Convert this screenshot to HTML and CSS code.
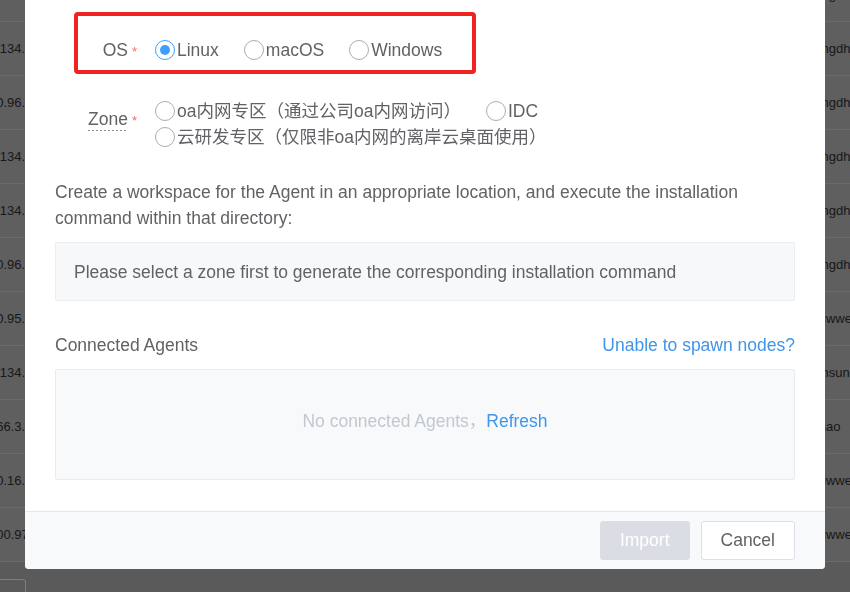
FILE: index.html
```html
<!DOCTYPE html>
<html lang="en">
<head>
<meta charset="utf-8">
<title>Import Agent</title>
<link rel="stylesheet" href="styles.css">
</head>
<body>
<div class="page">
  <div class="table">
    <div class="row"><span class="ip">9.134.58.12</span><span class="owner">wangdhui</span></div>
    <div class="row"><span class="ip">9.134.61.7</span><span class="owner">wangdhui</span></div>
    <div class="row"><span class="ip">10.96.12.45</span><span class="owner">wangdhui</span></div>
    <div class="row"><span class="ip">9.134.8.201</span><span class="owner">wangdhui</span></div>
    <div class="row"><span class="ip">9.134.77.19</span><span class="owner">wangdhui</span></div>
    <div class="row"><span class="ip">10.96.33.2</span><span class="owner">wangdhui</span></div>
    <div class="row"><span class="ip">10.95.1.18</span><span class="owner">zhuwwei</span></div>
    <div class="row"><span class="ip">9.134.2.33</span><span class="owner">wensun</span></div>
    <div class="row"><span class="ip">166.3.2.14</span><span class="owner">xuhao</span></div>
    <div class="row"><span class="ip">10.16.4.9</span><span class="owner">zhuwwei</span></div>
    <div class="row"><span class="ip">100.97.3.3</span><span class="owner">zhuwwei</span></div>
  </div>
  <div class="pager"></div>
</div>

<div class="mask"></div>

<div class="dialog">
  <div class="dialog-body">
    <div class="form-item">
      <label class="form-label">OS<span class="req">*</span></label>
      <div class="radio-group">
        <label class="radio checked"><span class="radio-input"></span><span class="radio-text">Linux</span></label>
        <label class="radio"><span class="radio-input"></span><span class="radio-text">macOS</span></label>
        <label class="radio"><span class="radio-input"></span><span class="radio-text">Windows</span></label>
      </div>
    </div>
    <div class="form-item zone">
      <label class="form-label"><span class="tip">Zone</span><span class="req">*</span></label>
      <div class="radio-group">
        <label class="radio"><span class="radio-input"></span><span class="radio-text">oa内网专区（通过公司oa内网访问）</span></label>
        <label class="radio"><span class="radio-input"></span><span class="radio-text">IDC</span></label>
        <label class="radio"><span class="radio-input"></span><span class="radio-text">云研发专区（仅限非oa内网的离岸云桌面使用）</span></label>
      </div>
    </div>
    <p class="desc">Create a workspace for the Agent in an appropriate location, and execute the installation command within that directory:</p>
    <div class="command">Please select a zone first to generate the corresponding installation command</div>
    <div class="agents-head">
      <span>Connected Agents</span>
      <a class="link">Unable to spawn nodes?</a>
    </div>
    <div class="agents-box">
      <span class="empty">No connected Agents，</span><a class="link">Refresh</a>
    </div>
  </div>
  <div class="dialog-footer">
    <button class="btn btn-primary" disabled>Import</button>
    <button class="btn">Cancel</button>
  </div>
  <div class="highlight"></div>
</div>
</body>
</html>
```

FILE: styles.css
```css
html, body {
  margin: 0;
  padding: 0;
}

body {
  width: 850px;
  height: 592px;
  overflow: hidden;
  position: relative;
  background: #b4b4b4;
  font-family: "Liberation Sans", Arial, "Noto Sans CJK SC", sans-serif;
}

/* background page (scrolled table) */
.page {
  margin-left: -11px;
  margin-top: -32px;
}

.row {
  height: 54px;
  box-sizing: border-box;
  border-bottom: 1px solid #d4d4d4;
  background: #bebebe;
  display: flex;
  align-items: center;
  font-size: 13px;
  color: #333333;
}

.ip {
  width: 200px;
  white-space: nowrap;
}

.owner {
  margin-left: auto;
  width: 45px;
  overflow: hidden;
  white-space: nowrap;
}

.pager {
  width: 37px;
  height: 28px;
  box-sizing: border-box;
  border: 1px solid #ffffff;
  border-radius: 3px;
  margin-top: 17px;
}

.mask {
  position: fixed;
  inset: 0;
  background: rgba(0, 0, 0, 0.5);
}

/* dialog */
.dialog {
  position: absolute;
  left: 25px;
  top: -20px;
  width: 800px;
  background: #ffffff;
  border-radius: 4px;
  overflow: hidden;
  font-family: "Liberation Sans", Arial, "Noto Sans CJK SC", sans-serif;
  font-size: 17.5px;
  line-height: 26px;
  color: #606266;
}

.dialog-body {
  padding: 57px 30px 31px;
}

.form-item {
  display: flex;
  align-items: flex-start;
}

.form-item.zone {
  margin-top: 35px;
}

.form-label {
  flex: none;
  width: 82px;
  height: 26px;
  margin-right: 18px;
  text-align: right;
  white-space: nowrap;
}

.zone .form-label {
  margin-top: 8px;
}

.tip {
  padding-bottom: 2px;
  background-image: linear-gradient(to right, #8e9197 50%, transparent 50%);
  background-size: 4px 1px;
  background-repeat: repeat-x;
  background-position: left bottom;
}

.req {
  color: #f56c6c;
  font-size: 13px;
  margin-left: 4px;
}

.radio-group {
  display: flex;
  flex-wrap: wrap;
  column-gap: 25px;
  row-gap: 0;
}

.radio {
  display: flex;
  align-items: center;
  height: 26px;
  white-space: nowrap;
}

.radio-input {
  position: relative;
  flex: none;
  width: 20px;
  height: 20px;
  box-sizing: border-box;
  border: 1px solid #a9acb2;
  border-radius: 50%;
  background: #ffffff;
  margin-right: 2px;
}

.radio.checked .radio-input {
  border-color: #409eff;
}

.radio.checked .radio-input::after {
  content: "";
  position: absolute;
  left: 4px;
  top: 4px;
  width: 10px;
  height: 10px;
  border-radius: 50%;
  background: #409eff;
}

.desc {
  margin: 29px 0 0;
}

.command {
  margin-top: 11px;
  padding: 16px 18px 15px;
  background: #f7f8fa;
  border: 1px solid #ebedf0;
  border-radius: 2px;
}

.agents-head {
  margin-top: 31px;
  display: flex;
  justify-content: space-between;
}

.link {
  color: #4096e8;
  cursor: pointer;
}

.agents-box {
  margin-top: 11px;
  height: 111px;
  box-sizing: border-box;
  padding-bottom: 7px;
  display: flex;
  align-items: center;
  justify-content: center;
  background: #f7f9fb;
  border: 1px solid #e8ebef;
  border-radius: 2px;
}

.empty {
  color: #c2c8d0;
}

.dialog-footer {
  display: flex;
  justify-content: flex-end;
  gap: 11px;
  padding: 9px 30px;
  background: #f8f9fb;
  border-top: 1px solid #e4e7ed;
}

.btn {
  height: 39px;
  box-sizing: border-box;
  padding: 0 19px;
  border: 1px solid #dcdfe6;
  border-radius: 3px;
  background: #ffffff;
  color: #606266;
  font-family: inherit;
  font-size: 17.5px;
  cursor: pointer;
}

.btn-primary {
  background: #dadde4;
  border-color: #dadde4;
  color: #ffffff;
  cursor: not-allowed;
}

/* red annotation frame */
.highlight {
  position: absolute;
  left: 49px;
  top: 32px;
  width: 402px;
  height: 62px;
  box-sizing: border-box;
  border: 4px solid #ef2420;
  border-radius: 4px;
  pointer-events: none;
}
```
